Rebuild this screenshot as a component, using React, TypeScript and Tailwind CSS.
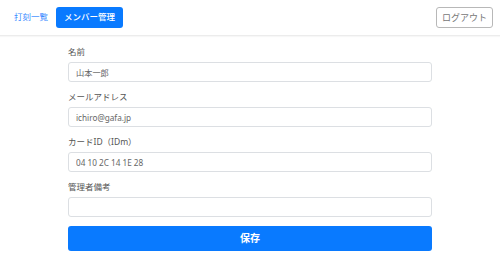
import React from "react";

const FONT = { fontFamily: '"Noto Sans", "Noto Sans CJK JP", sans-serif' };

const FIELDS = [
  { label: "名前", value: "山本一郎" },
  { label: "メールアドレス", value: "ichiro@gafa.jp" },
  { label: "カードID（IDm）", value: "04 10 2C 14 1E 28" },
  { label: "管理者備考", value: "" },
];

export default function App() {
  return (
    <div className="h-[263px] w-[500px] bg-white text-[#333]" style={FONT}>
      <header className="flex h-[36px] items-center justify-between border-b border-[#ececec] pl-[14px] pr-[7px] shadow-[0_1px_1px_rgba(0,0,0,0.03)]">
        <nav className="flex items-center gap-[8px]">
          <a className="text-[8.5px] text-[#3b8cff]">打刻一覧</a>
          <button className="flex h-[21px] w-[67px] items-center justify-center rounded-[3px] bg-[#097aff] text-[8.5px] font-medium text-white">
            メンバー管理
          </button>
        </nav>
        <button className="flex h-[21px] w-[57px] items-center justify-center rounded-[3px] border border-[#b8b8b8] text-[9px] text-[#777]">
          ログアウト
        </button>
      </header>

      <form className="mx-auto flex w-[364px] flex-col gap-[7px] pt-[8px]">
        {FIELDS.map((f) => (
          <div key={f.label} className="flex flex-col gap-[2px]">
            <label className="h-[16px] text-[8.5px] leading-[16px] text-[#555]">{f.label}</label>
            <input
              readOnly
              value={f.value}
              className="h-[20px] rounded-[3px] border border-[#dcdfe3] px-[7px] text-[8.2px] text-[#666] outline-none"
              style={FONT}
            />
          </div>
        ))}
        <button
          type="button"
          className="mt-[2px] h-[25px] rounded-[3px] bg-[#097aff] text-[10px] font-bold text-white"
        >
          保存
        </button>
      </form>
    </div>
  );
}
